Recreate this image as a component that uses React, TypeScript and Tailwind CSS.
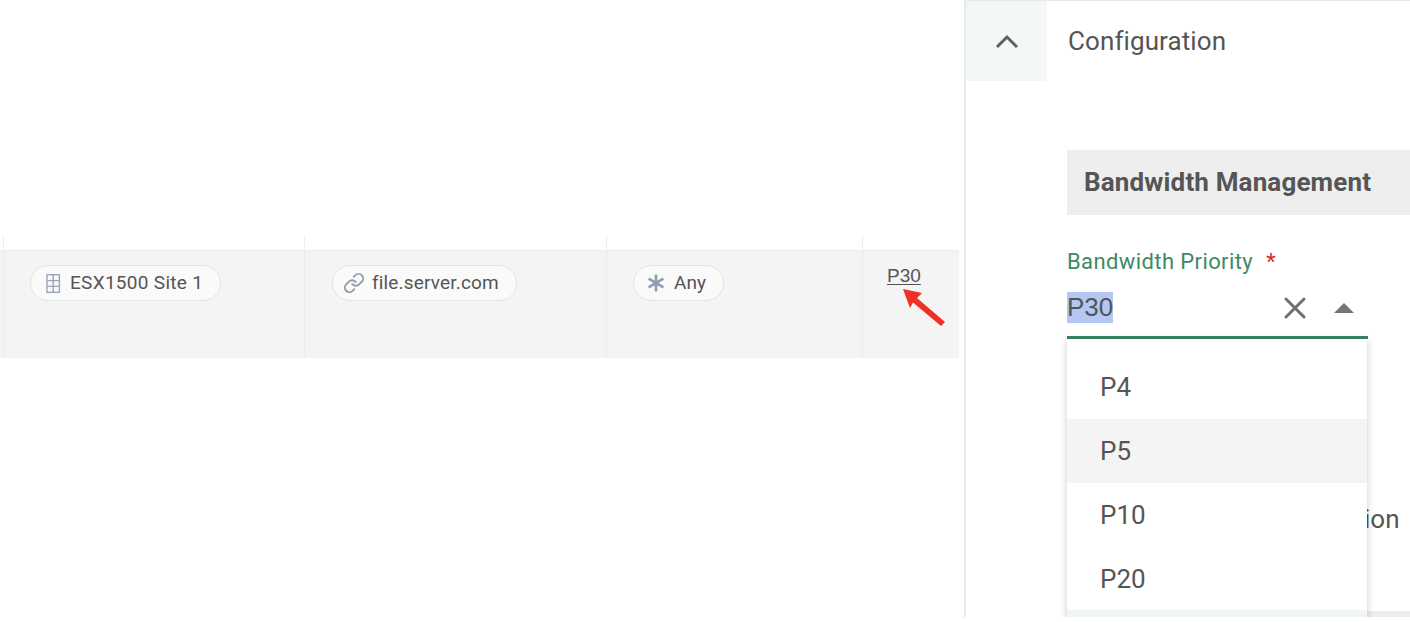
import { Link, X } from "lucide-react";
import type { ReactNode } from "react";

const options = ["P4", "P5", "P10", "P20"];

function Chip({ icon, label, tracking }: { icon: ReactNode; label: string; tracking: string }) {
  return (
    <span className={`${tracking} inline-flex h-[36px] items-center gap-[9px] rounded-full border border-[#e4e4e4] bg-[#fafafa] pl-[12px] pr-[17px] text-[19px] text-[#555555]`}>
      {icon}
      {label}
    </span>
  );
}

function GridIcon() {
  return (
    <svg className="ml-[2px]" width="16" height="19" viewBox="0 0 16 19" fill="none" stroke="#98a6bc" strokeWidth="1.4">
      <rect x="2" y="0.7" width="12.4" height="17.6" />
      <path d="M8.2 1v17M2 6.6h12M2 12.4h12" />
    </svg>
  );
}

function AsteriskIcon() {
  return (
    <svg className="ml-[1px]" width="18" height="18" viewBox="0 0 18 18" fill="none" stroke="#8e9bb0" strokeWidth="2.6">
      <path d="M9 0.5v17M1.6 4.7l14.8 8.6M1.6 13.3l14.8-8.6" />
    </svg>
  );
}

function DataRow() {
  return (
    <div className="relative grid grid-cols-[3px_301px_302px_256px_97px] font-['Roboto',sans-serif]">
      <div className="h-[15px]" />
      <div className="h-[15px] border-l border-[#eeeeee]" />
      <div className="h-[15px] border-l border-[#eeeeee]" />
      <div className="h-[15px] border-l border-[#eeeeee]" />
      <div className="h-[15px] border-l border-[#eeeeee]" />

      <div className="h-[108px] border-t border-[#ebebeb] bg-[#f4f4f4]" />
      <div className="h-[108px] border-l border-t border-[#ebebeb] bg-[#f4f4f4] pl-[26px] pt-[14px]">
        <Chip icon={<GridIcon />} label="ESX1500 Site 1" tracking="tracking-[0.3px]" />
      </div>
      <div className="h-[108px] border-l border-t border-[#ebebeb] bg-[#f4f4f4] pl-[27px] pt-[14px]">
        <Chip icon={<Link size={22} color="#8e9bb0" strokeWidth={2} className="-mx-[2px]" />} label="file.server.com" tracking="tracking-[0.17px]" />
      </div>
      <div className="h-[108px] border-l border-t border-[#ebebeb] bg-[#f4f4f4] pl-[26px] pt-[14px]">
        <Chip icon={<AsteriskIcon />} label="Any" tracking="tracking-[0px]" />
      </div>
      <div className="h-[108px] border-l border-t border-[#ebebeb] bg-[#f4f4f4] pl-[24px] pt-[13px]">
        <span className="font-['Liberation_Sans',sans-serif] text-[19px] leading-[24px] text-[#555555] underline underline-offset-2">P30</span>
      </div>

      {/* annotation arrow */}
      <svg className="absolute left-[900px] top-[50px]" width="48" height="42" viewBox="0 0 48 42" fill="#ee3124">
        <path d="M3 4 L22 8 L17 13 L45 37 L41 41 L13 17.5 L10 23 Z" />
      </svg>
    </div>
  );
}

export default function App() {
  return (
    <div className="flex h-[617px] w-[1410px] overflow-hidden bg-white font-['Roboto',sans-serif]">
      <div className="w-[965px] shrink-0 pt-[235px]">
        <DataRow />
      </div>

      <div className="relative -ml-px flex-1 border-l-2 border-t border-[#e9e9e9]">
        <div className="flex h-[80px] items-center">
          <div className="flex h-[80px] w-[81px] items-center justify-center bg-[#f3f8f6]">
            <svg width="24" height="16" viewBox="0 0 24 16" fill="none" stroke="#606060" strokeWidth="3">
              <path d="M2 14 L12 4 L22 14" />
            </svg>
          </div>
          <span className="pl-[21px] text-[26px] tracking-[0.1px] text-[#555555]">Configuration</span>
        </div>

        <div className="pl-[101px] pt-[69px]">
          <div className="flex h-[65px] items-center bg-[#eeeeee] pl-[17px] text-[26px] font-bold tracking-[0.15px] text-[#555555]">
            Bandwidth Management
          </div>

          <div className="relative w-[301px]">
            <div className="flex h-[60px] items-end gap-[13px] text-[22px] leading-[26px] tracking-[0.4px] text-[#3d8a66]">
              Bandwidth Priority
              <span className="text-[#e02b20]">*</span>
            </div>
            <div className="mt-[17px] flex h-[47px] items-start border-b-[3px] border-[#3a8463]">
              <span className="bg-[#b4c7f2] font-['Liberation_Sans',sans-serif] text-[26px] leading-[31px] text-[#555555]">P30</span>
              <X size={36} color="#6f6f6f" strokeWidth={2} className="-mt-[2px] ml-auto" />
              <span className="ml-[21px] mr-[14px] mt-[11px] h-0 w-0 border-x-[10px] border-b-[10px] border-x-transparent border-b-[#757575]" />
            </div>

            <div className="absolute left-0 top-[124px] z-10 h-[290px] w-[300px] bg-white pt-[16px] text-[26px] text-[#555555] shadow-[0_2px_8px_rgba(0,0,0,0.2)]">
              {options.map((option) => (
                <div
                  key={option}
                  className={option === "P5" ? "flex h-[64px] items-center bg-[#f4f4f4] pl-[33px]" : "flex h-[64px] items-center pl-[33px]"}
                >
                  {option}
                </div>
              ))}
              <div className="-mt-px h-[20px] bg-[#f0f6f4]" />
            </div>
          </div>

          <div className="pl-[297px] pt-[164px] text-[26px] leading-[32px] text-[#555555]">ion</div>
          <div className="mt-[76px] h-[8px] bg-[#eeeeee]" />
        </div>
      </div>
    </div>
  );
}
